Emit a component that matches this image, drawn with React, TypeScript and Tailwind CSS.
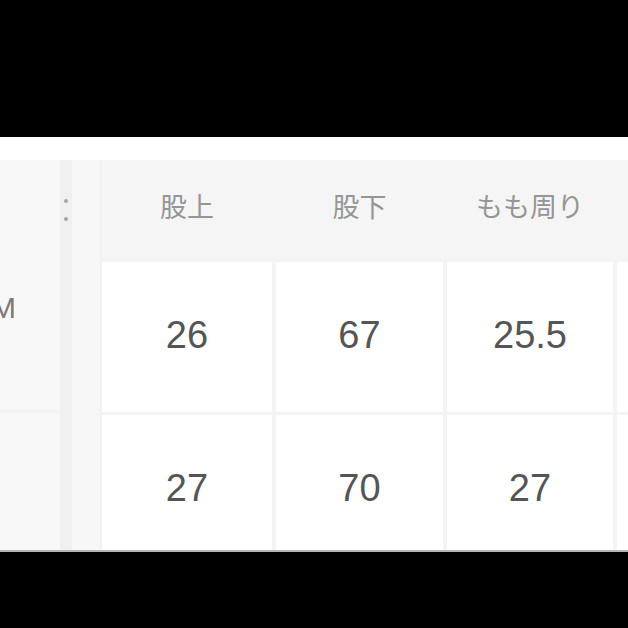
const headers = ['股上', '股下', 'もも周り']
const rows = [
  ['26', '67', '25.5'],
  ['27', '70', '27'],
]

const jp = "font-['Noto_Sans_CJK_JP',sans-serif]"
const num = "font-['Liberation_Sans',Arial,sans-serif]"

export default function App() {
  return (
    <div className="w-[628px] h-[628px] bg-black flex flex-col overflow-hidden">
      <div className="h-[137px] shrink-0 bg-black" />
      <div className="h-[23px] shrink-0 bg-white" />

      <div className="h-[390px] shrink-0 flex bg-[#f4f4f4] overflow-hidden">
        {/* size labels, scrolled partly out of view */}
        <div className="w-[60px] shrink-0 flex flex-col bg-[#f8f8f8] overflow-hidden">
          <div className="h-[100px] shrink-0" />
          <div className="h-[150px] shrink-0 pt-[33px] overflow-hidden">
            <span className={`block -ml-[9px] text-[30px] leading-none text-[#7a7a7a] ${num}`}>M</span>
          </div>
          <div className="h-[3px] shrink-0 bg-[#f3f3f3]" />
          <div className="flex-1" />
        </div>

        {/* scroll divider */}
        <div className="w-[12px] shrink-0 bg-[#f0f0f0] flex flex-col items-center pt-[39px] gap-[14px]">
          <div className="w-[4px] h-[4px] rounded-full bg-[#a5a5a5]" />
          <div className="w-[4px] h-[4px] rounded-full bg-[#a5a5a5]" />
        </div>
        <div className="w-[28px] shrink-0 bg-[#f7f7f7]" />
        <div className="w-[2px] shrink-0 bg-[#f1f1f1]" />

        {/* table */}
        <div className="flex-1 flex flex-col gap-y-[3px]">
          <div className="h-[99px] shrink-0 grid grid-cols-[170px_167px_166px_1fr] gap-x-[4px] bg-[#f5f5f5]">
            {headers.map((h) => (
              <div key={h} className={`flex items-center justify-center pb-[6px] text-[27px] text-[#959595] ${jp}`}>
                {h}
              </div>
            ))}
            <div />
          </div>
          {rows.map((r, i) => (
            <div key={i} className="h-[150px] shrink-0 grid grid-cols-[170px_167px_166px_1fr] gap-x-[4px]">
              {r.map((v, j) => (
                <div key={j} className={`bg-white flex items-center justify-center pb-[4px] text-[38px] text-[#555] ${num}`}>
                  {v}
                </div>
              ))}
              <div className="bg-white" />
            </div>
          ))}
        </div>
      </div>

      <div className="h-[2px] shrink-0 bg-[#b5b5b5]" />
      <div className="flex-1 bg-black" />
    </div>
  )
}
